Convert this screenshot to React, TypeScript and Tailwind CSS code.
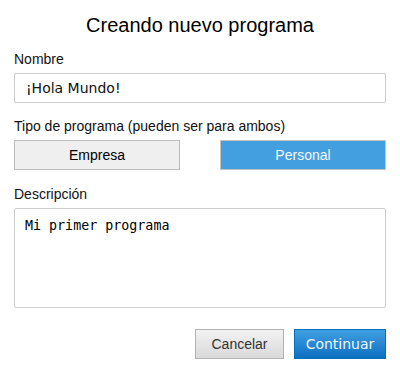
import { useState } from 'react';

export default function App() {
  const [nombre, setNombre] = useState('¡Hola Mundo!');
  const [tipo, setTipo] = useState<'empresa' | 'personal'>('personal');
  const [descripcion, setDescripcion] = useState('Mi primer programa');

  return (
    <div className="w-[400px] h-[373px] bg-white px-[14px] pt-[13px] font-['Liberation_Sans',Arial,sans-serif] text-[#111]">
      <h1 className="text-[20px] leading-[24px] text-center text-black">Creando nuevo programa</h1>

      <label className="block mt-[12px] text-[14px] leading-[20px]">Nombre</label>
      <input
        value={nombre}
        onChange={e => setNombre(e.target.value)}
        className="block mt-[4px] w-full h-[30px] px-[11px] border border-[#cdcdcd] rounded-[2px] text-[14px] text-[#111] font-['DejaVu_Sans',sans-serif] outline-none"
      />

      <label className="block mt-[13px] text-[14px] leading-[20px]">Tipo de programa (pueden ser para ambos)</label>
      <div className="flex justify-between mt-[4px]">
        <button
          onClick={() => setTipo('empresa')}
          className={tipo === 'empresa'
            ? 'w-[166px] h-[30px] bg-[#449fe0] border border-[#c4c4c4] text-[14px] text-[#f4f8fc]'
            : 'w-[166px] h-[30px] bg-[#efefef] border border-[#bdbdbd] text-[14px] text-black'}
        >
          Empresa
        </button>
        <button
          onClick={() => setTipo('personal')}
          className={tipo === 'personal'
            ? 'w-[166px] h-[30px] bg-[#449fe0] border border-[#c4c4c4] text-[14px] text-[#f4f8fc]'
            : 'w-[166px] h-[30px] bg-[#efefef] border border-[#bdbdbd] text-[14px] text-black'}
        >
          Personal
        </button>
      </div>

      <label className="block mt-[14px] text-[14px] leading-[20px]">Descripción</label>
      <textarea
        value={descripcion}
        onChange={e => setDescripcion(e.target.value)}
        className="block mt-[4px] w-full h-[100px] px-[10px] py-[9px] border border-[#cdcdcd] rounded-[2px] text-[13.33px] leading-[16px] text-black font-['DejaVu_Sans_Mono',monospace] resize-none outline-none"
      />

      <div className="flex justify-end gap-[10px] mt-[21px]">
        <button className="w-[89px] h-[30px] border border-[#b3b3b3] bg-gradient-to-b from-[#f2f2f2] to-[#d9d9d9] text-[14px] text-[#333]">
          Cancelar
        </button>
        <button className="w-[92px] h-[30px] border border-[#0a6db9] bg-gradient-to-b from-[#3ea0e2] to-[#0a6fc1] text-[14px] text-[#eef6fd] font-['DejaVu_Sans',sans-serif]">
          Continuar
        </button>
      </div>
    </div>
  );
}
